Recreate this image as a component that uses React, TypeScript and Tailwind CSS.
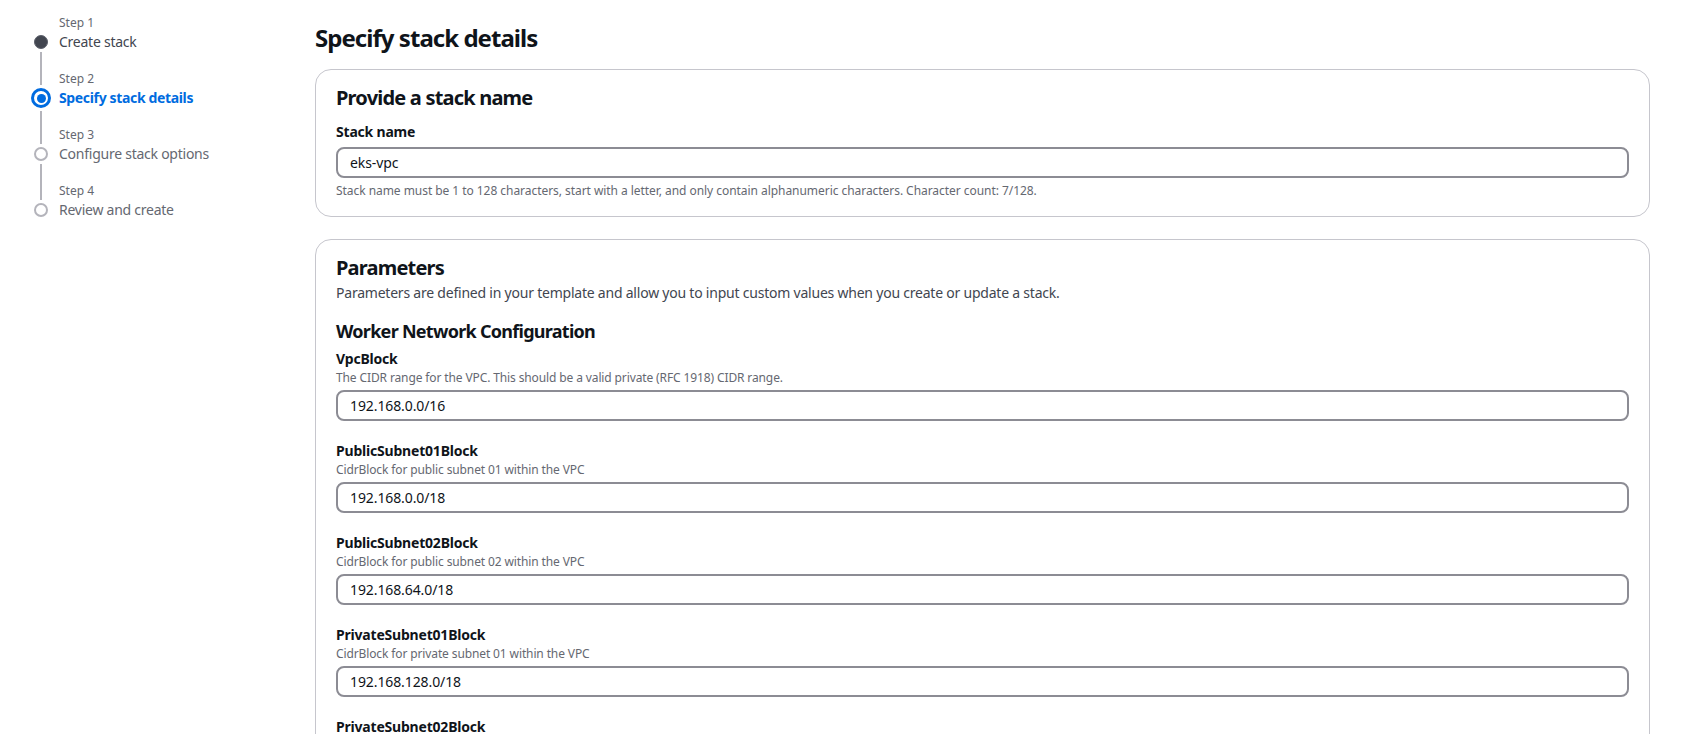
import React from 'react';

type Step = {
    num: number;
    label: string;
    state: 'done' | 'current' | 'upcoming';
};

const steps: Step[] = [
    { num: 1, label: 'Create stack', state: 'done' },
    { num: 2, label: 'Specify stack details', state: 'current' },
    { num: 3, label: 'Configure stack options', state: 'upcoming' },
    { num: 4, label: 'Review and create', state: 'upcoming' },
];

const params = [
    { name: 'VpcBlock', desc: 'The CIDR range for the VPC. This should be a valid private (RFC 1918) CIDR range.', value: '192.168.0.0/16' },
    { name: 'PublicSubnet01Block', desc: 'CidrBlock for public subnet 01 within the VPC', value: '192.168.0.0/18' },
    { name: 'PublicSubnet02Block', desc: 'CidrBlock for public subnet 02 within the VPC', value: '192.168.64.0/18' },
    { name: 'PrivateSubnet01Block', desc: 'CidrBlock for private subnet 01 within the VPC', value: '192.168.128.0/18' },
    { name: 'PrivateSubnet02Block', desc: 'CidrBlock for private subnet 02 within the VPC', value: '192.168.192.0/18' },
];

function StepDot({ state }: { state: Step['state'] }) {
    if (state === 'current') {
        return (
            <div className="w-[20px] h-[20px] rounded-full border-[3px] border-[#006ce0] bg-white flex items-center justify-center flex-shrink-0">
                <div className="w-[9px] h-[9px] rounded-full bg-[#006ce0]" />
            </div>
        );
    }
    if (state === 'done') {
        return <div className="w-[14px] h-[14px] rounded-full bg-[#424650] border border-[#5c606b] flex-shrink-0" />;
    }
    return <div className="w-[14px] h-[14px] rounded-full bg-white border-2 border-[#b4b4bb] flex-shrink-0" />;
}

function Wizard() {
    return (
        <nav className="w-[315px] flex-shrink-0 pl-[31px]">
            {steps.map((step, i) => (
                <div key={step.num} className="flex gap-[8px] h-[56px]">
                    {/* indicator column */}
                    <div className="w-[20px] flex flex-col items-center">
                        <div
                            className={`w-[2px] ${step.state === 'current' ? 'h-[29px]' : 'h-[32px]'} ${i === 0 ? 'bg-transparent' : 'bg-[#b4b4bb]'}`}
                        />
                        <div className="mt-[3px]">
                            <StepDot state={step.state} />
                        </div>
                        <div className={`w-[2px] flex-1 mt-[3px] ${i === steps.length - 1 ? 'bg-transparent' : 'bg-[#b4b4bb]'}`} />
                    </div>
                    <div className="pt-[15px]">
                        <p className="text-[12px] leading-[16px] text-[#656871]">Step {step.num}</p>
                        <p
                            className={`text-[14px] leading-[22px] whitespace-nowrap ${
                                step.state === 'current'
                                    ? 'text-[#006ce0] font-bold tracking-[-0.35px]'
                                    : step.state === 'done'
                                    ? 'text-[#424650] tracking-[-0.25px]'
                                    : 'text-[#656871] tracking-[-0.25px]'
                            }`}
                        >
                            {step.label}
                        </p>
                    </div>
                </div>
            ))}
        </nav>
    );
}

function TextInput({ value }: { value: string }) {
    return (
        <div className="h-[31px] border-2 border-[#8c8c94] rounded-[8px] px-[12px] flex items-center text-[14px] tracking-[-0.1px] text-[#0f141a] bg-white">
            {value}
        </div>
    );
}

export default function App() {
    return (
        <div
            className="min-h-screen bg-white flex text-[#0f141a]"
            style={{ fontFamily: '"Noto Sans", "Open Sans", Arial, sans-serif' }}
        >
            <Wizard />

            <main className="flex-1 pt-[23px] pr-[47px]">
                <h1 className="text-[24px] leading-[30px] font-bold tracking-[-0.04em]">Specify stack details</h1>

                {/* Stack name */}
                <section className="mt-[16px] border border-[#c6c6cd] rounded-[16px] px-[20px] pt-[15px] pb-[17px]">
                    <h2 className="text-[20px] leading-[26px] font-bold tracking-[-0.04em]">Provide a stack name</h2>
                    <p className="mt-[11px] text-[14px] leading-[20px] font-bold tracking-[-0.2px]">Stack name</p>
                    <div className="mt-[5px]">
                        <TextInput value="eks-vpc" />
                    </div>
                    <p className="mt-[5px] text-[12px] leading-[16px] tracking-[-0.05px] text-[#656871]">
                        Stack name must be 1 to 128 characters, start with a letter, and only contain alphanumeric characters. Character count: 7/128.
                    </p>
                </section>

                {/* Parameters */}
                <section className="mt-[22px] border border-[#c6c6cd] rounded-[16px] px-[20px] pt-[15px] pb-[20px]">
                    <h2 className="text-[20px] leading-[26px] font-bold tracking-[-0.04em]">Parameters</h2>
                    <p className="mt-[2px] text-[14px] leading-[20px] tracking-[-0.22px] text-[#424650]">
                        Parameters are defined in your template and allow you to input custom values when you create or update a stack.
                    </p>
                    <h3 className="mt-[16px] text-[18px] leading-[24px] font-bold tracking-[-0.04em]">Worker Network Configuration</h3>
                    <div className="mt-[6px]">
                        {params.map((p) => (
                            <div key={p.name} className="pb-[20px]">
                                <p className="text-[14px] leading-[20px] font-bold tracking-[-0.2px]">{p.name}</p>
                                <p className="text-[12px] leading-[18px] tracking-[-0.12px] text-[#656871]">{p.desc}</p>
                                <div className="mt-[3px]">
                                    <TextInput value={p.value} />
                                </div>
                            </div>
                        ))}
                    </div>
                </section>
            </main>
        </div>
    );
}
